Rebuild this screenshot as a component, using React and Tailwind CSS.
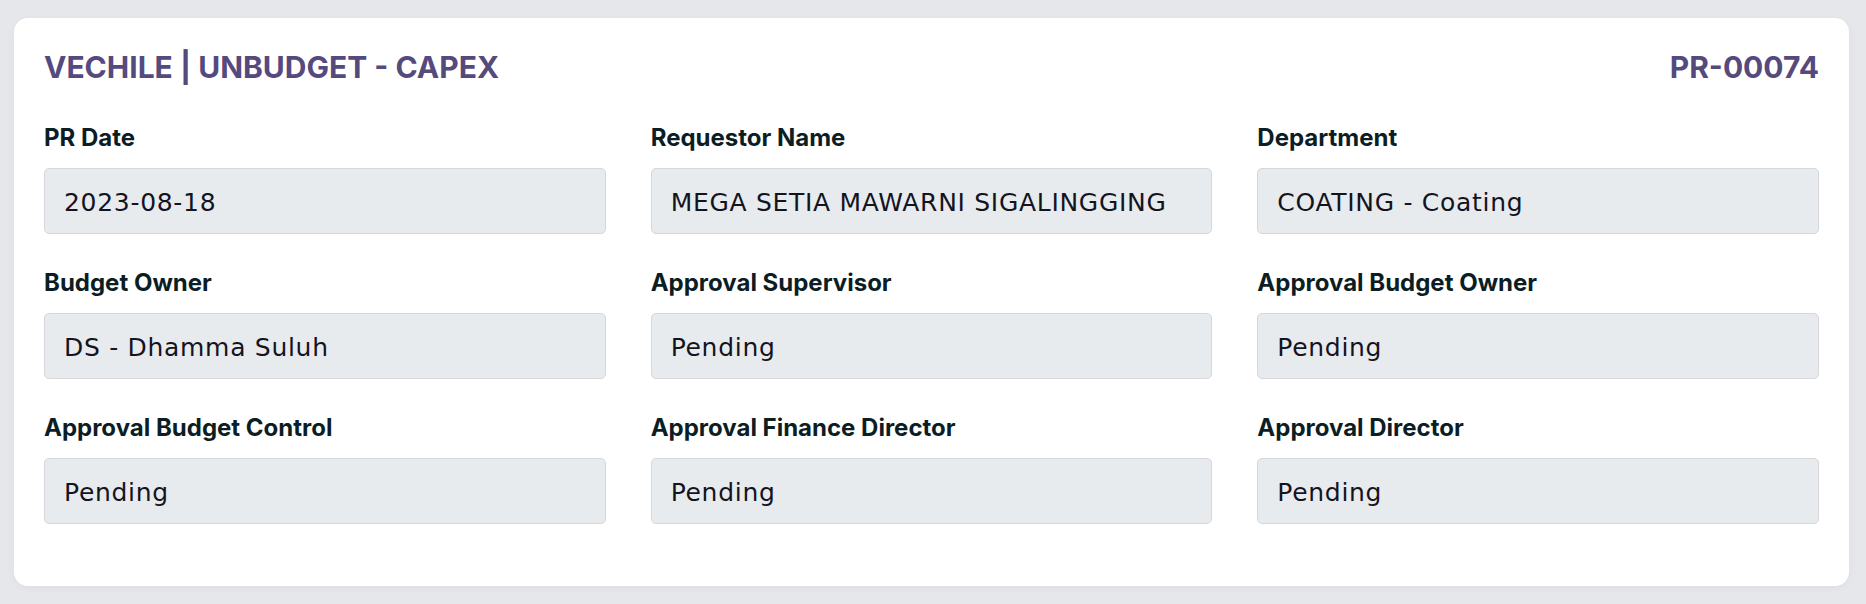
import React from 'react';

const fields = [
    { label: 'PR Date', value: '2023-08-18' },
    { label: 'Requestor Name', value: 'MEGA SETIA MAWARNI SIGALINGGING' },
    { label: 'Department', value: 'COATING - Coating' },
    { label: 'Budget Owner', value: 'DS - Dhamma Suluh' },
    { label: 'Approval Supervisor', value: 'Pending' },
    { label: 'Approval Budget Owner', value: 'Pending' },
    { label: 'Approval Budget Control', value: 'Pending' },
    { label: 'Approval Finance Director', value: 'Pending' },
    { label: 'Approval Director', value: 'Pending' },
];

export default function App() {
    return (
        <div className="min-h-screen bg-[#e5e7eb] pl-[14px] pr-[17px] pt-[18px] font-['Inter',sans-serif]">
            <div className="bg-white rounded-[14px] shadow-[0_2px_10px_rgba(0,0,0,0.04)] px-[30px] pt-[30px] pb-[62px]">
                {/* header */}
                <div className="flex justify-between items-center mb-[34px]">
                    <h1 className="text-[30px] leading-[38px] font-bold text-[#554a7d]">VECHILE | UNBUDGET - CAPEX</h1>
                    <h1 className="text-[30px] leading-[38px] font-bold text-[#554a7d]">PR-00074</h1>
                </div>

                <div className="grid grid-cols-3 gap-x-[45px] gap-y-[31px]">
                    {fields.map((f) => (
                        <div key={f.label}>
                            <label className="block text-[24px] leading-[35px] font-bold text-[#0c1d24] mb-[13px]">{f.label}</label>
                            <div className="h-[66px] flex items-center px-[19px] pt-[3px] bg-[#e8ebee] border border-[#d5d7da] rounded-[5px] text-[25px] tracking-[0.7px] text-[#14141f] font-['DejaVu_Sans',sans-serif]">
                                {f.value}
                            </div>
                        </div>
                    ))}
                </div>
            </div>
        </div>
    );
}
